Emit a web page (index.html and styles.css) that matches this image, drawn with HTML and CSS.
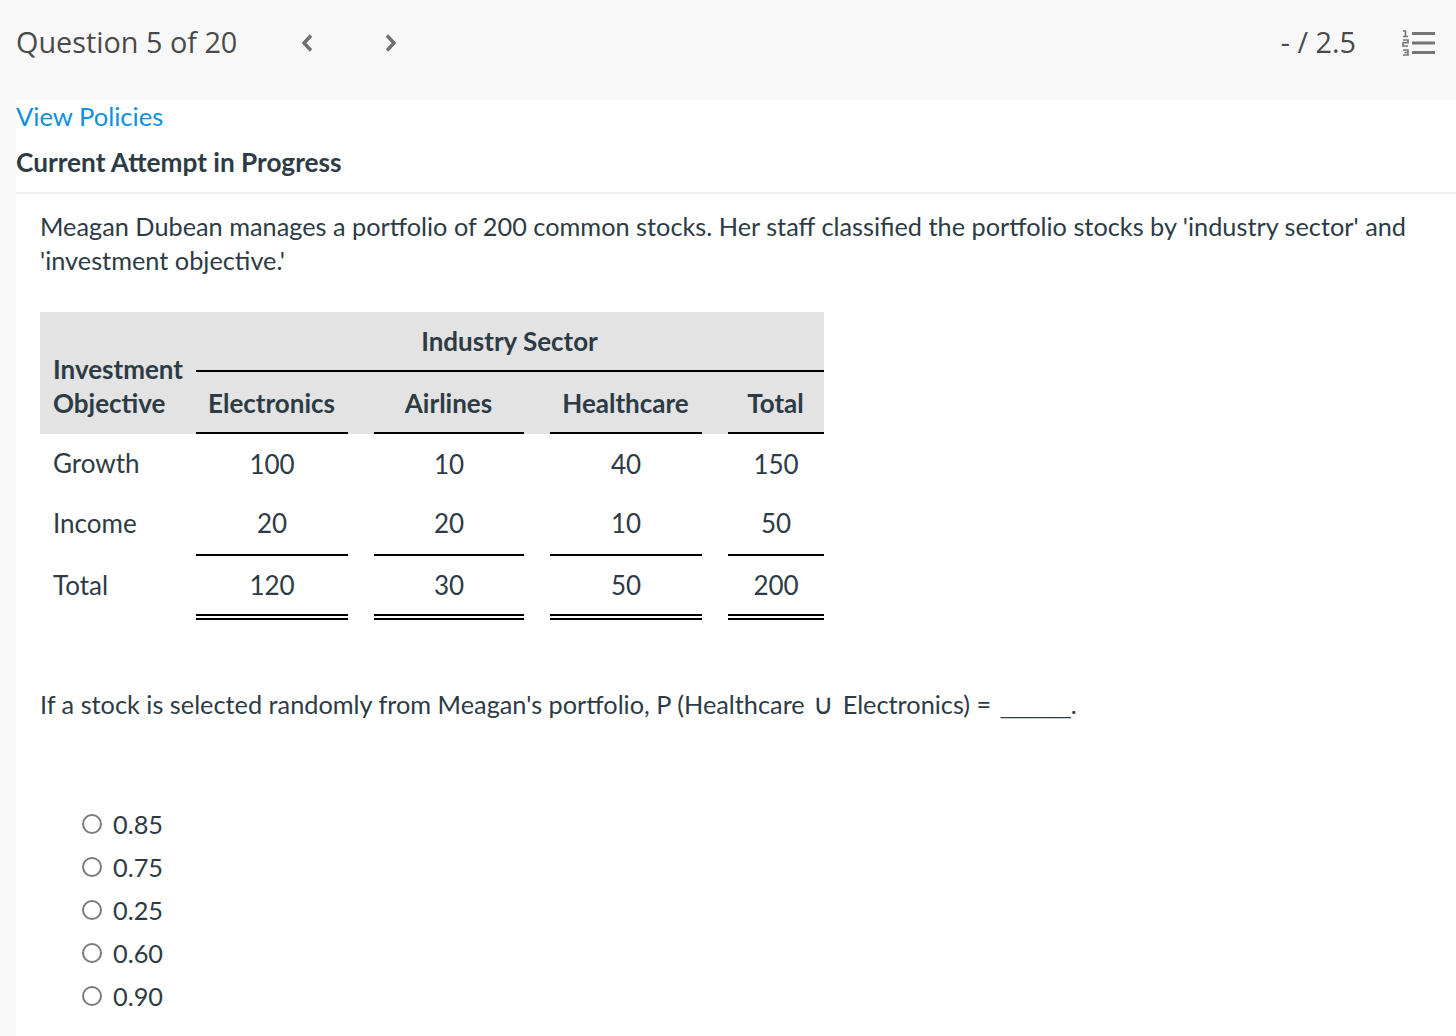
FILE: index.html
```html
<!DOCTYPE html>
<html lang="en">
<head>
    <meta charset="UTF-8">
    <title>Question 5 of 20</title>
    <link rel="stylesheet" href="styles.css">
</head>
<body>

    <header class="top-bar">
        <div class="top-left">
            <span class="question-count">Question 5 of 20</span>
            <svg class="chevron chevron-prev" width="14" height="20" viewBox="0 0 14 20"><path d="M11 2.5 L4 10 L11 17.5" fill="none" stroke="#6f6f6f" stroke-width="3.4"/></svg>
            <svg class="chevron chevron-next" width="14" height="20" viewBox="0 0 14 20"><path d="M3 2.5 L10 10 L3 17.5" fill="none" stroke="#6f6f6f" stroke-width="3.4"/></svg>
        </div>
        <div class="top-right">
            <span class="score">- / 2.5</span>
            <svg class="list-icon" width="33" height="26" viewBox="0 0 33 26">
                <path d="M10 3.5 H33 M10 13 H33 M10 22.5 H33" stroke="#757575" stroke-width="3" fill="none"/>
                <path d="M1 1 H3.5 V6.5 M1 6.5 H6 M1 10 H6 V12.8 H1 V16 H6 M1 20 H6 V25 H1 M2.5 22.5 H6" stroke="#757575" stroke-width="1.6" fill="none"/>
            </svg>
        </div>
    </header>

    <main class="content">
        <a class="policies" href="#">View Policies</a>
        <h2 class="attempt">Current Attempt in Progress</h2>

        <section class="question">
            <p class="intro">Meagan Dubean manages a portfolio of 200 common stocks. Her staff classified the portfolio stocks by 'industry sector' and 'investment objective.'</p>

            <table class="stocks">
                <colgroup>
                    <col class="c-label"><col class="c-a"><col class="c-gap"><col class="c-b"><col class="c-gap"><col class="c-a"><col class="c-gap"><col class="c-total">
                </colgroup>
                <thead>
                    <tr class="head-one">
                        <th class="label" rowspan="2">Investment<br>Objective</th>
                        <th class="sector" colspan="7">Industry Sector</th>
                    </tr>
                    <tr class="head-two">
                        <th class="rule">Electronics</th><th></th>
                        <th class="rule">Airlines</th><th></th>
                        <th class="rule">Healthcare</th><th></th>
                        <th class="rule">Total</th>
                    </tr>
                </thead>
                <tbody>
                    <tr class="row-growth">
                        <td class="label">Growth</td>
                        <td>100</td><td></td><td>10</td><td></td><td>40</td><td></td><td>150</td>
                    </tr>
                    <tr class="row-income">
                        <td class="label">Income</td>
                        <td class="rule">20</td><td></td><td class="rule">20</td><td></td><td class="rule">10</td><td></td><td class="rule">50</td>
                    </tr>
                    <tr class="row-total">
                        <td class="label">Total</td>
                        <td class="double">120</td><td></td><td class="double">30</td><td></td><td class="double">50</td><td></td><td class="double">200</td>
                    </tr>
                </tbody>
            </table>

            <p class="ask">If a stock is selected randomly from Meagan's portfolio, P (Healthcare <span class="union">∪</span> Electronics) = <span class="blank">______</span>.</p>

            <ul class="answers">
                <li><span class="radio"></span>0.85</li>
                <li><span class="radio"></span>0.75</li>
                <li><span class="radio"></span>0.25</li>
                <li><span class="radio"></span>0.60</li>
                <li><span class="radio"></span>0.90</li>
            </ul>
        </section>
    </main>

</body>
</html>
```

FILE: styles.css
```css
html, body {
    margin: 0;
    padding: 0;
}
body {
    height: 1036px;
    overflow: hidden;
    background: #f8f8f8;
    color: #2d3b45;
    font-family: 'Lato', sans-serif;
    font-size: 25.3px;
}
.top-bar {
    height: 100px;
    padding: 0 21px 15px 16px;
    box-sizing: border-box;
    display: flex;
    justify-content: space-between;
    align-items: center;
    font-family: 'Open Sans', sans-serif;
    font-size: 28.8px;
    color: #4a4a4a;
}
.top-left, .top-right {
    display: flex;
    align-items: center;
}
.question-count, .score {
    margin-bottom: 2px;
}
.chevron-prev {
    margin-left: 63px;
}
.chevron-next {
    margin-left: 70px;
}
.list-icon {
    margin-left: 46px;
}
.content {
    margin-left: 16px;
    background: #fff;
    height: 936px;
}
.policies {
    display: block;
    height: 32px;
    line-height: 32px;
    font-size: 25.6px;
    color: #0e8fe0;
    text-decoration: none;
}
.attempt {
    margin: 0;
    padding: 13px 0 13px;
    font-size: 26.2px;
    line-height: 34px;
    font-weight: 700;
    border-bottom: 2px solid #eeeeee;
}
.question {
    padding: 15px 24px 0;
}
.intro {
    margin: 0;
    line-height: 34px;
}
.stocks {
    margin-top: 35px;
    border-collapse: separate;
    border-spacing: 0;
    table-layout: fixed;
    width: 784px;
    font-size: 26px;
}
.c-label { width: 156px; }
.c-a { width: 152px; }
.c-b { width: 150px; }
.c-gap { width: 26px; }
.c-total { width: 96px; }
.stocks th, .stocks td {
    padding: 0;
    text-align: center;
    line-height: 34px;
}
.stocks th {
    background: #e3e3e3;
    font-weight: 700;
    padding-right: 1px;
}
.stocks .label {
    text-align: left;
    padding-left: 13px;
}
th.label {
    vertical-align: bottom;
    padding-bottom: 14px;
}
.head-one {
    height: 60px;
}
.sector {
    border-bottom: 2px solid #000;
}
.head-two {
    height: 62px;
}
.stocks th.rule {
    border-bottom: 2px solid #000;
    padding-top: 2px;
}
.stocks td.rule {
    border-bottom: 2px solid #000;
    padding-bottom: 2px;
}
.stocks .double {
    border-bottom: 6px double #000;
}
.row-growth {
    height: 60px;
}
.row-income {
    height: 62px;
}
.row-total {
    height: 64px;
}
.stocks .row-growth .label {
    padding-bottom: 2px;
}
.stocks .row-income .label {
    padding-bottom: 4px;
}
.stocks .row-total .label {
    padding-bottom: 6px;
}
.ask {
    margin: 67px 0 0;
    line-height: 34px;
}
.union {
    font-family: 'Liberation Sans', sans-serif;
    font-size: 28px;
    line-height: 20px;
    margin: 0 2px;
}
.blank {
    font-family: 'Liberation Sans', sans-serif;
    font-size: 21px;
    margin-left: 3px;
}
.answers {
    list-style: none;
    margin: 78px 0 0;
    padding: 0 0 0 42px;
}
.answers li {
    display: flex;
    align-items: center;
    height: 43px;
}
.radio {
    width: 16px;
    height: 16px;
    border: 2px solid #7b7b7b;
    border-radius: 50%;
    margin-right: 11px;
}
```
